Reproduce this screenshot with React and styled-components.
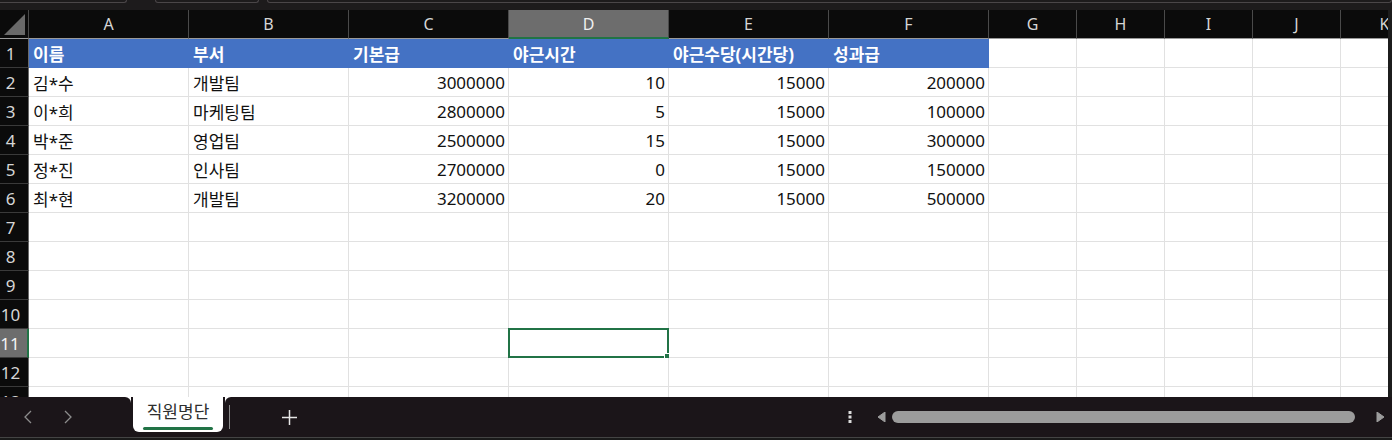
import React from 'react';
import styled, { createGlobalStyle, css } from 'styled-components';

const GlobalStyle = createGlobalStyle`
  html, body {
    margin: 0;
    padding: 0;
    background: #1d1b1c;
  }
  * {
    box-sizing: border-box;
  }
`;

const FONT = '"Noto Sans", "Noto Sans CJK KR", sans-serif';
const GREEN = '#217346';
const BAR = '#1b1519';

const COLUMNS = ['A', 'B', 'C', 'D', 'E', 'F', 'G', 'H', 'I', 'J', 'K'];
const HEADINGS = ['이름', '부서', '기본급', '야근시간', '야근수당(시간당)', '성과급'];
const EMPLOYEES = [
  ['김*수', '개발팀', 3000000, 10, 15000, 200000],
  ['이*희', '마케팅팀', 2800000, 5, 15000, 100000],
  ['박*준', '영업팀', 2500000, 15, 15000, 300000],
  ['정*진', '인사팀', 2700000, 0, 15000, 150000],
  ['최*현', '개발팀', 3200000, 20, 15000, 500000],
];
const ROW_COUNT = 13;
const SELECTED = { col: 3, row: 11 };

const Page = styled.div`
  width: 1392px;
  height: 440px;
  display: flex;
  flex-direction: column;
  overflow: hidden;
  font-family: ${FONT};
`;

const TopStrip = styled.div`
  height: 10px;
  flex: none;
  display: flex;
  background: #1d1b1c;
`;

const Pill = styled.div`
  height: 3px;
  width: ${p => p.$w}px;
  margin-left: ${p => p.$ml}px;
  border: 1px solid #4a4648;
  border-top: none;
  border-radius: 0 0 5px 5px;
  ${p => p.$open && css`border-left: none; border-radius: 0 0 5px 0;`}
`;

const SheetArea = styled.div`
  flex: 1;
  display: flex;
  min-height: 0;
`;

const Grid = styled.div`
  width: 1388px;
  overflow: hidden;
  display: grid;
  grid-template-columns: 29px repeat(6, 160px) repeat(5, 88px);
  grid-template-rows: 29px repeat(${ROW_COUNT}, 29px);
  background: #fff;
`;

const VScroll = styled.div`
  flex: none;
  width: 4px;
  background: #1c1c1c;
`;

const Corner = styled.div`
  background: #0b0b0b;
  border-right: 1px solid #4a4a4a;
  border-bottom: 1px solid #9a9a9a;
  display: flex;
  align-items: flex-end;
  justify-content: flex-end;
  padding: 0 3px 3px 0;
`;

const ColHeader = styled.div`
  display: flex;
  align-items: center;
  justify-content: center;
  font-size: 16px;
  background: ${p => (p.$active ? '#6d6d6d' : '#0b0b0b')};
  border-right: 1px solid #4a4a4a;
  border-bottom: ${p => (p.$active ? `2px solid ${GREEN}` : '1px solid #9a9a9a')};
  color: ${p => (p.$active ? '#f0f0f0' : '#d6d6d6')};
`;

const RowHeader = styled.div`
  display: flex;
  align-items: center;
  justify-content: center;
  padding-right: 7px;
  font-size: 17px;
  background: ${p => (p.$active ? '#6d6d6d' : '#0b0b0b')};
  border-bottom: 1px solid #3a3a3a;
  border-right: ${p => (p.$active ? `2px solid ${GREEN}` : '1px solid #6a6a6a')};
  color: ${p => (p.$active ? '#f4f4f4' : '#d6d6d6')};
`;

const Cell = styled.div`
  position: relative;
  display: flex;
  align-items: center;
  justify-content: ${p => (p.$num ? 'flex-end' : 'flex-start')};
  padding: 0 3px 0 4px;
  font-size: 17px;
  color: #111;
  white-space: nowrap;
  border-right: 1px solid #e1e1e1;
  border-bottom: 1px solid #e1e1e1;
  ${p => p.$head && css`
    background: #4472c4;
    border-color: #4472c4;
    color: #fff;
    font-weight: 700;
  `}
`;

const Selection = styled.div`
  position: absolute;
  left: -1px;
  top: -1px;
  right: -1px;
  bottom: -1px;
  border: 2px solid ${GREEN};
  pointer-events: none;
`;

const Handle = styled.div`
  position: absolute;
  right: -3px;
  bottom: -3px;
  width: 6px;
  height: 6px;
  background: ${GREEN};
  border: 1px solid #fff;
`;

const BottomBar = styled.div`
  flex: none;
  height: 43px;
  display: flex;
  flex-direction: column;
  background: #fff;
`;

const TabRow = styled.div`
  height: 40px;
  display: flex;
`;

const BaseLine = styled.div`
  height: 3px;
  background: #1a1a1a;
  border-top: 1px solid #444;
`;

const LeftNav = styled.div`
  width: 131px;
  background: ${BAR};
  border-top-right-radius: 6px;
  display: flex;
  align-items: center;
  gap: 32px;
  padding-left: 24px;
`;

const NavButton = styled.div`
  width: 8px;
  height: 14px;
  display: flex;
`;

const TabSlot = styled.div`
  width: 94px;
  background: ${BAR};
  padding-left: 2px;
`;

const SheetTab = styled.div`
  width: 90px;
  height: 35px;
  background: #fff;
  border-radius: 0 0 6px 6px;
  display: flex;
  flex-direction: column;
  align-items: center;
  padding-top: 4px;
`;

const TabLabel = styled.div`
  font-size: 17px;
  line-height: 22px;
  color: #2e2e2e;
`;

const TabUnderline = styled.div`
  margin-top: 4px;
  width: 70px;
  height: 3px;
  border-radius: 2px;
  background: ${GREEN};
`;

const RightBlock = styled.div`
  flex: 1;
  background: ${BAR};
  border-top-left-radius: 6px;
  display: flex;
  align-items: center;
`;

const Separator = styled.div`
  width: 1px;
  height: 24px;
  margin-left: 4px;
  background: #8a8a8a;
`;

const PlusButton = styled.div`
  width: 40px;
  margin-left: 39px;
  display: flex;
  justify-content: center;
`;

const ScrollArea = styled.div`
  margin-left: auto;
  width: 552px;
  display: flex;
  align-items: center;
  padding-right: 7px;
`;

const Dots = styled.div`
  width: 20px;
  display: flex;
  justify-content: center;
`;

const Arrow = styled.div`
  width: 9px;
  height: 10px;
  display: flex;
  margin-left: ${p => p.$ml}px;
`;

const Thumb = styled.div`
  width: 464px;
  height: 12px;
  margin-left: 6px;
  border-radius: 6px;
  background: #9c9c9c;
`;

const Chevron = ({ dir }) => (
  <svg width="8" height="14" viewBox="0 0 8 14">
    <path
      d={dir === 'left' ? 'M7 1 L1 7 L7 13' : 'M1 1 L7 7 L1 13'}
      fill="none"
      stroke="#8c8c8c"
      strokeWidth="1.3"
    />
  </svg>
);

const Triangle = ({ dir }) => (
  <svg width="9" height="10" viewBox="0 0 9 10">
    <path
      d={dir === 'left' ? 'M8 0 L8 10 L1 5 Z' : 'M1 0 L1 10 L8 5 Z'}
      fill="#9c9c9c"
      strokeLinejoin="round"
      stroke="#9c9c9c"
      strokeWidth="1"
    />
  </svg>
);

const cellValue = (row, col) => {
  if (row === 1) return HEADINGS[col];
  const data = EMPLOYEES[row - 2];
  return data ? data[col] : undefined;
};

const App = () => {
  const rows = Array.from({ length: ROW_COUNT }, (_, i) => i + 1);

  return (
    <Page>
      <GlobalStyle />
      <TopStrip>
        <Pill $w={127} $ml={0} $open />
        <Pill $w={104} $ml={28} />
        <Pill $w={1125} $ml={8} />
      </TopStrip>

      <SheetArea>
        <Grid>
          <Corner>
            <svg width="21" height="21" viewBox="0 0 21 21">
              <polygon points="21,0 21,21 0,21" fill="#6a6a6a" />
            </svg>
          </Corner>
          {COLUMNS.map((c, i) => (
            <ColHeader key={c} $active={i === SELECTED.col}>{c}</ColHeader>
          ))}

          {rows.map(r => (
            <React.Fragment key={r}>
              <RowHeader $active={r === SELECTED.row}>{r}</RowHeader>
              {COLUMNS.map((c, ci) => {
                const value = ci < 6 ? cellValue(r, ci) : undefined;
                const isSelected = r === SELECTED.row && ci === SELECTED.col;
                return (
                  <Cell
                    key={c}
                    $head={r === 1 && ci < 6}
                    $num={typeof value === 'number'}
                  >
                    {value}
                    {isSelected && (
                      <Selection>
                        <Handle />
                      </Selection>
                    )}
                  </Cell>
                );
              })}
            </React.Fragment>
          ))}
        </Grid>
        <VScroll />
      </SheetArea>

      <BottomBar>
        <TabRow>
          <LeftNav>
            <NavButton><Chevron dir="left" /></NavButton>
            <NavButton><Chevron dir="right" /></NavButton>
          </LeftNav>
          <TabSlot>
            <SheetTab>
              <TabLabel>직원명단</TabLabel>
              <TabUnderline />
            </SheetTab>
          </TabSlot>
          <RightBlock>
            <Separator />
            <PlusButton>
              <svg width="15" height="15" viewBox="0 0 15 15">
                <path d="M7.5 0 V15 M0 7.5 H15" stroke="#e6e6e6" strokeWidth="1.5" />
              </svg>
            </PlusButton>
            <ScrollArea>
              <Dots>
                <svg width="4" height="12" viewBox="0 0 4 12">
                  <rect x="0.5" y="0" width="3" height="3" fill="#dcdcdc" />
                  <rect x="0.5" y="4.5" width="3" height="3" fill="#dcdcdc" />
                  <rect x="0.5" y="9" width="3" height="3" fill="#dcdcdc" />
                </svg>
              </Dots>
              <Arrow $ml={17}><Triangle dir="left" /></Arrow>
              <Thumb />
              <Arrow $ml={21}><Triangle dir="right" /></Arrow>
            </ScrollArea>
          </RightBlock>
        </TabRow>
        <BaseLine />
      </BottomBar>
    </Page>
  );
};

export default App;
